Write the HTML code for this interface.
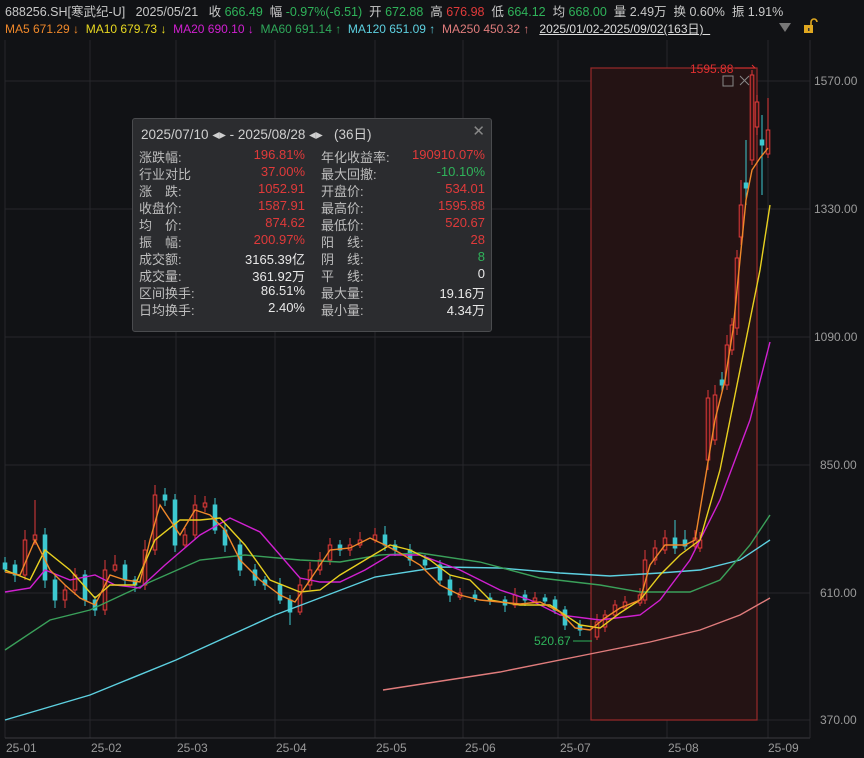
<!DOCTYPE html>
<html><head><meta charset="utf-8"><style>
html,body{margin:0;padding:0;background:#111215;width:864px;height:758px;overflow:hidden;font-family:"Liberation Sans","Noto Sans CJK SC",sans-serif}
.h{position:absolute;white-space:nowrap;font-size:12.5px;color:#c8c8c8}
.g{color:#2fb35a}.r{color:#e03a3a}
#tip{position:absolute;left:132px;top:118px;width:358px;height:212px;background:#2b2c2f;border:1px solid #4a4b4e;border-radius:3px;color:#bdbdbd;font-size:13px}
#tip .t{position:absolute;left:8px;top:4px;font-size:13.5px;color:#cfcfcf}
#tip .row{position:absolute;left:6px;width:346px;height:17px}
#tip .row span{position:absolute}
.l1{left:0}.v1{right:180px;text-align:right}.l2{left:182px}.v2{right:0;text-align:right}
.w{color:#e8e8e8}
.ax{position:absolute;font-size:12px;color:#9a9a9a}
</style></head><body>
<div class="h" style="left:5px;top:1px">688256.SH[寒武纪-U]&nbsp;&nbsp;&nbsp;2025/05/21&nbsp;&nbsp;&nbsp;收 <span class="g">666.49</span>&nbsp;&nbsp;幅 <span class="g">-0.97%(-6.51)</span>&nbsp;&nbsp;开 <span class="g">672.88</span>&nbsp;&nbsp;高 <span class="r">676.98</span>&nbsp;&nbsp;低 <span class="g">664.12</span>&nbsp;&nbsp;均 <span class="g">668.00</span>&nbsp;&nbsp;量 2.49万&nbsp;&nbsp;换 0.60%&nbsp;&nbsp;振 1.91%</div>
<div class="h" style="left:5px;top:20px;font-size:12px"><span style="color:#f0882a">MA5 671.29 ↓</span>&nbsp;&nbsp;<span style="color:#e8d820">MA10 679.73 ↓</span>&nbsp;&nbsp;<span style="color:#d020d0">MA20 690.10 ↓</span>&nbsp;&nbsp;<span style="color:#2fa85a">MA60 691.14 ↑</span>&nbsp;&nbsp;<span style="color:#5dd0e0">MA120 651.09 ↑</span>&nbsp;&nbsp;<span style="color:#e07c7c">MA250 450.32 ↑</span>&nbsp;&nbsp;&nbsp;<span style="color:#ddd;text-decoration:underline">2025/01/02-2025/09/02(163日)&nbsp;&nbsp;</span></div>
<svg style="position:absolute;left:778px;top:21px" width="14" height="12"><polygon points="1,2 13,2 7,11" fill="#777"/></svg>
<svg style="position:absolute;left:802px;top:18px" width="16" height="16"><rect x="2" y="7" width="9" height="8" fill="#e0a820"/><path d="M9 7 V4 a3 3 0 0 1 6 0" stroke="#e0a820" stroke-width="1.6" fill="none"/><rect x="6" y="10" width="1.5" height="3" fill="#333"/></svg>

<svg style="position:absolute;left:0;top:0" width="864" height="758">
<g stroke="#26272b" stroke-width="1">
<line x1="5" y1="81" x2="810" y2="81"/><line x1="5" y1="209" x2="810" y2="209"/><line x1="5" y1="337" x2="810" y2="337"/><line x1="5" y1="465" x2="810" y2="465"/><line x1="5" y1="593" x2="810" y2="593"/><line x1="5" y1="720" x2="810" y2="720"/>
<line x1="5" y1="40" x2="5" y2="738"/><line x1="90" y1="40" x2="90" y2="738"/><line x1="176" y1="40" x2="176" y2="738"/><line x1="275" y1="40" x2="275" y2="738"/><line x1="375" y1="40" x2="375" y2="738"/><line x1="463" y1="40" x2="463" y2="738"/><line x1="558" y1="40" x2="558" y2="738"/><line x1="667" y1="40" x2="667" y2="738"/><line x1="768" y1="40" x2="768" y2="738"/>
</g>
<line x1="5" y1="738" x2="810" y2="738" stroke="#3a3b3f"/>
<line x1="810" y1="40" x2="810" y2="738" stroke="#2a2b2f"/>
<rect x="591" y="68" width="166" height="652" fill="#241314" stroke="#9a2a2a" stroke-width="1.2"/>

<g fill="#3dc8d0" stroke="#3dc8d0" stroke-width="1">
<path d="M5 557V572 M15 560V582 M45 528V588 M55 575V608 M85 570V606 M95 596V616 M125 560V586 M135 576V592 M165 488V506 M175 494V552 M215 498V534 M225 524V552 M240 540V576 M255 564V586 M265 576V590 M280 578V604 M290 595V625 M340 540V556 M385 526V551 M395 540V556 M410 544V566 M425 555V570 M440 560V585 M450 575V602 M475 590V602 M490 593V605 M505 596V612 M525 590V606 M545 594V604 M555 596V614 M565 606V630 M580 620V636 M675 520V554 M685 530V550 M722 372V392 M746 140V205 M762 115V195"/>
<rect x="3.2" y="563" width="3.6" height="6"/><rect x="13.2" y="565" width="3.6" height="10"/><rect x="43.2" y="535" width="3.6" height="45"/><rect x="53.2" y="580" width="3.6" height="20"/><rect x="83.2" y="575" width="3.6" height="25"/><rect x="93.2" y="600" width="3.6" height="10"/><rect x="123.2" y="565" width="3.6" height="15"/><rect x="133.2" y="580" width="3.6" height="5"/><rect x="163.2" y="495" width="3.6" height="5"/><rect x="173.2" y="500" width="3.6" height="45"/><rect x="213.2" y="505" width="3.6" height="25"/><rect x="223.2" y="530" width="3.6" height="15"/><rect x="238.2" y="545" width="3.6" height="25"/><rect x="253.2" y="570" width="3.6" height="10"/><rect x="263.2" y="580" width="3.6" height="5"/><rect x="278.2" y="585" width="3.6" height="15"/><rect x="288.2" y="600" width="3.6" height="12"/><rect x="338.2" y="545" width="3.6" height="5"/><rect x="383.2" y="535" width="3.6" height="10"/><rect x="393.2" y="545" width="3.6" height="5"/><rect x="408.2" y="550" width="3.6" height="10"/><rect x="423.2" y="560" width="3.6" height="5"/><rect x="438.2" y="565" width="3.6" height="15"/><rect x="448.2" y="580" width="3.6" height="15"/><rect x="473.2" y="595" width="3.6" height="3"/><rect x="488.2" y="598" width="3.6" height="3"/><rect x="503.2" y="600" width="3.6" height="5"/><rect x="523.2" y="595" width="3.6" height="5"/><rect x="543.2" y="598" width="3.6" height="3"/><rect x="553.2" y="600" width="3.6" height="10"/><rect x="563.2" y="610" width="3.6" height="15"/><rect x="578.2" y="625" width="3.6" height="5"/><rect x="673.2" y="538" width="3.6" height="10"/><rect x="683.2" y="540" width="3.6" height="6"/><rect x="720.2" y="380" width="3.6" height="5"/><rect x="744.2" y="183" width="3.6" height="5"/><rect x="760.2" y="140" width="3.6" height="5"/>
</g>
<g fill="#3a1515" stroke="#e03a3a" stroke-width="1">
<path d="M25 530V580 M35 500V545 M65 585V608 M75 568V595 M105 560V615 M115 555V572 M145 540V590 M155 485V555 M185 528V548 M195 495V540 M205 496V512 M300 578V615 M310 562V590 M320 552V575 M330 538V565 M350 538V556 M360 532V548 M375 528V543 M460 588V600 M515 588V608 M535 592V603 M597 614V640 M605 610V632 M615 600V618 M625 596V610 M640 588V606 M645 550V604 M655 540V565 M665 530V554 M695 530V550 M700 532V552 M708 390V470 M715 385V445 M727 335V390 M732 318V355 M737 250V335 M741 180V245 M752 70V165 M757 95V135 M768 98V158"/>
<rect x="23.2" y="540" width="3.6" height="35"/><rect x="33.2" y="535" width="3.6" height="5"/><rect x="63.2" y="590" width="3.6" height="10"/><rect x="73.2" y="575" width="3.6" height="15"/><rect x="103.2" y="570" width="3.6" height="40"/><rect x="113.2" y="565" width="3.6" height="5"/><rect x="143.2" y="550" width="3.6" height="35"/><rect x="153.2" y="495" width="3.6" height="55"/><rect x="183.2" y="535" width="3.6" height="10"/><rect x="193.2" y="505" width="3.6" height="30"/><rect x="203.2" y="503" width="3.6" height="4"/><rect x="298.2" y="585" width="3.6" height="27"/><rect x="308.2" y="570" width="3.6" height="15"/><rect x="318.2" y="560" width="3.6" height="10"/><rect x="328.2" y="545" width="3.6" height="15"/><rect x="348.2" y="545" width="3.6" height="5"/><rect x="358.2" y="540" width="3.6" height="5"/><rect x="373.2" y="535" width="3.6" height="5"/><rect x="458.2" y="593" width="3.6" height="4"/><rect x="513.2" y="595" width="3.6" height="10"/><rect x="533.2" y="598" width="3.6" height="3"/><rect x="595.2" y="622" width="3.6" height="15"/><rect x="603.2" y="615" width="3.6" height="12"/><rect x="613.2" y="605" width="3.6" height="10"/><rect x="623.2" y="602" width="3.6" height="6"/><rect x="638.2" y="595" width="3.6" height="8"/><rect x="643.2" y="560" width="3.6" height="40"/><rect x="653.2" y="548" width="3.6" height="12"/><rect x="663.2" y="538" width="3.6" height="12"/><rect x="693.2" y="538" width="3.6" height="8"/><rect x="698.2" y="540" width="3.6" height="8"/><rect x="706.2" y="398" width="3.6" height="62"/><rect x="713.2" y="395" width="3.6" height="45"/><rect x="725.2" y="345" width="3.6" height="40"/><rect x="730.2" y="325" width="3.6" height="25"/><rect x="735.2" y="258" width="3.6" height="70"/><rect x="739.2" y="205" width="3.6" height="32"/><rect x="750.2" y="75" width="3.6" height="85"/><rect x="755.2" y="102" width="3.6" height="25"/><rect x="766.2" y="130" width="3.6" height="24"/>
</g>

<g fill="none" stroke-width="1.4">
<polyline stroke="#e07c7c" points="383,690 500,672 600,652 650,642 700,630 740,615 770,598"/>
<polyline stroke="#5dd0e0" points="5,720 90,695 176,660 275,615 375,577 440,567 500,568 560,573 610,576 660,573 700,570 740,560 770,540"/>
<polyline stroke="#3aa05a" points="5,650 50,620 90,610 150,582 200,560 245,555 300,560 340,562 380,555 420,553 480,562 540,578 600,585 640,592 690,592 720,580 750,545 770,515"/>
<polyline stroke="#d020d0" points="5,592 30,588 45,570 70,580 95,575 115,585 140,588 165,565 200,535 230,518 260,532 300,578 320,582 340,582 365,570 390,555 420,555 460,570 500,590 530,600 560,615 600,620 640,615 660,600 690,560 720,500 750,420 770,342"/>
<polyline stroke="#e8d020" points="5,570 30,580 45,550 70,570 95,598 110,585 135,585 155,540 180,520 200,520 220,518 245,545 270,580 300,592 320,590 340,575 365,560 390,545 410,550 430,560 450,575 470,580 490,600 520,605 550,605 580,625 600,628 620,613 640,600 660,575 680,555 700,540 720,470 740,370 760,270 770,205"/>
<polyline stroke="#f0882a" points="5,572 20,575 35,540 50,570 65,585 80,598 95,605 110,575 125,580 140,582 150,540 160,505 170,520 180,535 195,510 210,515 225,530 240,560 260,580 280,595 295,602 310,580 330,550 350,548 370,538 385,545 400,553 420,565 440,585 460,595 480,600 500,602 520,604 540,602 560,612 575,628 590,630 605,618 620,608 640,600 650,565 665,545 685,545 695,540 705,480 715,420 725,380 733,330 740,260 746,200 752,170 760,158 768,148"/>
</g>
<text x="690" y="73" fill="#e03030" font-size="12" font-family="Liberation Sans">1595.88</text>
<polyline points="735,68 755,68 752,65" fill="none" stroke="#e03030"/>
<rect x="723" y="76" width="10" height="10" fill="none" stroke="#888"/>
<path d="M740 76 l9 9 M749 76 l-9 9" stroke="#888"/>
<text x="534" y="645" fill="#2fb35a" font-size="12" font-family="Liberation Sans">520.67</text>
<line x1="573" y1="641" x2="592" y2="641" stroke="#2fb35a"/>
</svg>

<div class="ax" style="left:814px;top:74px">1570.00</div>
<div class="ax" style="left:814px;top:202px">1330.00</div>
<div class="ax" style="left:814px;top:330px">1090.00</div>
<div class="ax" style="left:820px;top:458px">850.00</div>
<div class="ax" style="left:820px;top:586px">610.00</div>
<div class="ax" style="left:820px;top:713px">370.00</div>
<div class="ax" style="left:6px;top:741px">25-01</div>
<div class="ax" style="left:91px;top:741px">25-02</div>
<div class="ax" style="left:177px;top:741px">25-03</div>
<div class="ax" style="left:276px;top:741px">25-04</div>
<div class="ax" style="left:376px;top:741px">25-05</div>
<div class="ax" style="left:465px;top:741px">25-06</div>
<div class="ax" style="left:560px;top:741px">25-07</div>
<div class="ax" style="left:668px;top:741px">25-08</div>
<div class="ax" style="left:768px;top:741px">25-09</div>

<div id="tip">
<div class="t">2025/07/10 ◂▸ - 2025/08/28 ◂▸ &nbsp;&nbsp;(36日)</div>
<div style="position:absolute;right:6px;top:3px;color:#888;font-size:15px">✕</div>
<div class="row" style="top:28px"><span class="l1">涨跌幅:</span><span class="v1 r">196.81%</span><span class="l2">年化收益率:</span><span class="v2 r">190910.07%</span></div>
<div class="row" style="top:45px"><span class="l1">行业对比</span><span class="v1 r">37.00%</span><span class="l2">最大回撤:</span><span class="v2 g">-10.10%</span></div>
<div class="row" style="top:62px"><span class="l1">涨　跌:</span><span class="v1 r">1052.91</span><span class="l2">开盘价:</span><span class="v2 r">534.01</span></div>
<div class="row" style="top:79px"><span class="l1">收盘价:</span><span class="v1 r">1587.91</span><span class="l2">最高价:</span><span class="v2 r">1595.88</span></div>
<div class="row" style="top:96px"><span class="l1">均　价:</span><span class="v1 r">874.62</span><span class="l2">最低价:</span><span class="v2 r">520.67</span></div>
<div class="row" style="top:113px"><span class="l1">振　幅:</span><span class="v1 r">200.97%</span><span class="l2">阳　线:</span><span class="v2 r">28</span></div>
<div class="row" style="top:130px"><span class="l1">成交额:</span><span class="v1 w">3165.39亿</span><span class="l2">阴　线:</span><span class="v2 g">8</span></div>
<div class="row" style="top:147px"><span class="l1">成交量:</span><span class="v1 w">361.92万</span><span class="l2">平　线:</span><span class="v2 w">0</span></div>
<div class="row" style="top:164px"><span class="l1">区间换手:</span><span class="v1 w">86.51%</span><span class="l2">最大量:</span><span class="v2 w">19.16万</span></div>
<div class="row" style="top:181px"><span class="l1">日均换手:</span><span class="v1 w">2.40%</span><span class="l2">最小量:</span><span class="v2 w">4.34万</span></div>
</div>
</body></html>
